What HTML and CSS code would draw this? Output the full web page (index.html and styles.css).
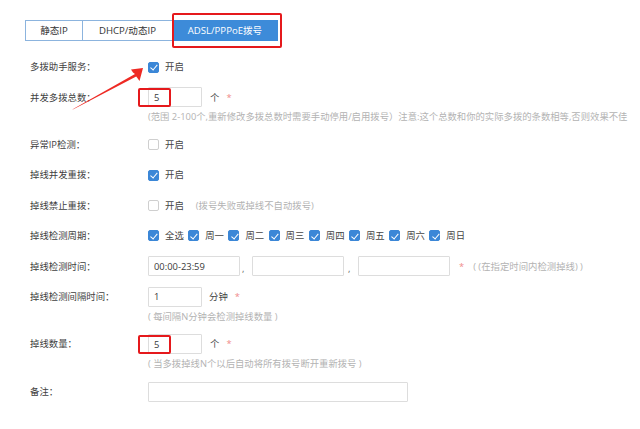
FILE: index.html
```html
<!DOCTYPE html>
<html>
<head>
<meta charset="utf-8">
<link rel="stylesheet" href="styles.css">
</head>
<body>
<div class="page">
  <div class="tabs">
    <div class="tab">静态IP</div>
    <div class="tab tab2">DHCP/动态IP</div>
    <div class="tab tab3 active">ADSL/PPPoE拨号</div>
  </div>

  <div class="form">
    <div class="field">
      <div class="row"><div class="label">多拨助手服务：</div><span class="cb on"></span><span class="txt">开启</span></div>
    </div>
    <div class="field">
      <div class="row"><div class="label">并发多拨总数：</div><span class="hl"><input class="inp w54" value="5"></span><span class="unit">个</span><span class="star">*</span></div>
      <div class="help">(范围 2-100个,重新修改多拨总数时需要手动停用/启用拨号）注意:这个总数和你的实际多拨的条数相等,否则效果不佳</div>
    </div>
    <div class="field">
      <div class="row"><div class="label">异常IP检测：</div><span class="cb"></span><span class="txt">开启</span></div>
    </div>
    <div class="field">
      <div class="row"><div class="label">掉线并发重拨：</div><span class="cb on"></span><span class="txt">开启</span></div>
    </div>
    <div class="field">
      <div class="row"><div class="label">掉线禁止重拨：</div><span class="cb"></span><span class="txt">开启</span><span class="note">(拨号失败或掉线不自动拨号)</span></div>
    </div>
    <div class="field">
      <div class="row"><div class="label">掉线检测周期：</div>
        <span class="day"><span class="cb on"></span><span class="txt">全选</span></span>
        <span class="day"><span class="cb on"></span><span class="txt">周一</span></span>
        <span class="day"><span class="cb on"></span><span class="txt">周二</span></span>
        <span class="day"><span class="cb on"></span><span class="txt">周三</span></span>
        <span class="day"><span class="cb on"></span><span class="txt">周四</span></span>
        <span class="day"><span class="cb on"></span><span class="txt">周五</span></span>
        <span class="day"><span class="cb on"></span><span class="txt">周六</span></span>
        <span class="day"><span class="cb on"></span><span class="txt">周日</span></span>
      </div>
    </div>
    <div class="field">
      <div class="row"><div class="label">掉线检测时间：</div><input class="inp w92" value="00:00-23:59"><span class="comma">,</span><input class="inp w92" value=""><span class="comma">,</span><input class="inp w92" value=""><span class="star s2">*</span><span class="note n2">( (在指定时间内检测掉线) )</span></div>
    </div>
    <div class="field">
      <div class="row"><div class="label">掉线检测间隔时间：</div><input class="inp w54" value="1"><span class="unit u2">分钟</span><span class="star">*</span></div>
      <div class="help">( 每间隔N分钟会检测掉线数量 )</div>
    </div>
    <div class="field">
      <div class="row"><div class="label">掉线数量：</div><span class="hl"><input class="inp w54" value="5"></span><span class="unit">个</span><span class="star">*</span></div>
      <div class="help">( 当多拨掉线N个以后自动将所有拨号断开重新拨号 )</div>
    </div>
    <div class="field">
      <div class="row"><div class="label">备注：</div><input class="inp w260" value=""></div>
    </div>
  </div>

  <svg class="arrow" width="640" height="429" viewBox="0 0 640 429">
    <polygon points="72,110 74,108.6 135,74 133,72.6 131,69.5 143,68 139.5,81 137,77.5 136.2,76.6" fill="#ee2a24"/>
  </svg>
</div>
</body>
</html>
```

FILE: styles.css
```css
html, body {
  margin: 0;
  padding: 0;
  background: #ffffff;
}
.page {
  position: relative;
  width: 640px;
  height: 429px;
  overflow: hidden;
  font-family: "Open Sans", "Noto Sans CJK SC", sans-serif;
  color: #444;
  font-size: 9.4px;
}
.tabs {
  display: flex;
  margin: 20px 0 0 25px;
  height: 21px;
}
.tab {
  box-sizing: border-box;
  height: 21px;
  width: 58px;
  border: 1px solid #8cb4de;
  display: flex;
  align-items: center;
  justify-content: center;
  color: #333;
  font-size: 9.6px;
  line-height: 1;
}
.tab2 {
  width: 90px;
  border-left: none;
}
.tab3 {
  width: 105px;
  border-left: none;
  position: relative;
}
.tab.active {
  background: #3d8bd9;
  border-color: #3d8bd9;
  color: #ffffff;
}
.tab3::after {
  content: "";
  position: absolute;
  left: -1px;
  top: -8px;
  right: -5px;
  bottom: -8px;
  border: 2px solid #e5191c;
  border-radius: 2px;
}
.form {
  margin: 16px 0 0 30px;
  display: flex;
  flex-direction: column;
}
.field {
  margin-bottom: 10.4px;
}
.row {
  display: flex;
  align-items: center;
  height: 20px;
}
.label {
  width: 118px;
  flex: none;
  color: #3f3f3f;
  line-height: 1;
}
.cb {
  box-sizing: border-box;
  width: 11px;
  height: 11px;
  border: 1px solid #cfcfcf;
  border-radius: 2px;
  background: #fff;
  flex: none;
  position: relative;
  margin-right: 6px;
}
.cb.on {
  background: #3b87d7;
  border-color: #3b87d7;
}
.cb.on::after {
  content: "";
  position: absolute;
  left: 3.2px;
  top: 0.5px;
  width: 2.6px;
  height: 5.8px;
  border-right: 1.6px solid #fff;
  border-bottom: 1.6px solid #fff;
  transform: rotate(40deg);
}
.txt {
  color: #444;
  line-height: 1;
}
.day {
  display: flex;
  align-items: center;
  width: 40.2px;
  flex: none;
}
.note {
  color: #b3b3b3;
  margin-left: 12px;
  line-height: 1;
}
.n2 {
  margin-left: 9px;
}
.inp {
  box-sizing: border-box;
  height: 20px;
  border: 1px solid #dddddd;
  border-radius: 1px;
  padding: 0 0 0 5px;
  margin: 0;
  font-family: "Open Sans", "Noto Sans CJK SC", sans-serif;
  font-size: 9.4px;
  color: #3a3a3a;
  background: #fff;
  outline: none;
  flex: none;
}
.w54 { width: 54px; }
.w92 { width: 92px; }
.w260 { width: 260px; }
.hl {
  position: relative;
  display: flex;
}
.hl::after {
  content: "";
  position: absolute;
  left: -10px;
  top: 1px;
  width: 33px;
  height: 19px;
  box-sizing: border-box;
  border: 2px solid #e5191c;
  border-radius: 2px;
}
.unit {
  margin-left: 8px;
  color: #444;
  line-height: 1;
}
.u2 {
  margin-left: 7px;
}
.star {
  margin-left: 7px;
  color: #f08a8a;
  line-height: 1;
}
.s2 {
  margin-left: 9px;
}
.comma {
  width: 12px;
  padding-left: 2px;
  box-sizing: border-box;
  flex: none;
  color: #666;
  align-self: flex-end;
  line-height: 14px;
}
.comma + .inp + .comma {
  width: 14px;
  padding-left: 4px;
}
.help {
  margin: 3px 0 0 118px;
  height: 14px;
  line-height: 14px;
  color: #b3b3b3;
  font-size: 9.35px;
  white-space: nowrap;
}
.arrow {
  position: absolute;
  left: 0;
  top: 0;
  pointer-events: none;
}
```
